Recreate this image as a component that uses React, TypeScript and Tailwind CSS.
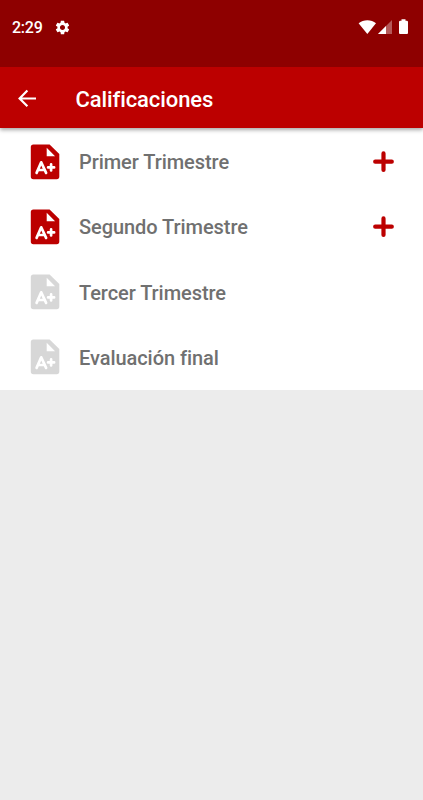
import { MdSettings } from "react-icons/md";

type Term = {
  label: string;
  available: boolean;
};

const terms: Term[] = [
  { label: "Primer Trimestre", available: true },
  { label: "Segundo Trimestre", available: true },
  { label: "Tercer Trimestre", available: false },
  { label: "Evaluación final", available: false },
];

function GradeIcon({ className }: { className: string }) {
  return (
    <svg width="30" height="36" viewBox="0 0 30 36" className={className}>
      <path
        fill="currentColor"
        fillRule="evenodd"
        d="M3.4.4h16.2l9.7 9.6v22.6a2.6 2.6 0 0 1-2.6 2.6H3.4A2.6 2.6 0 0 1 .8 32.6V3A2.6 2.6 0 0 1 3.4.4zM16.7 3.8v8.4h8.4z"
      />
      <g fill="none" stroke="#fff" strokeLinecap="round" strokeLinejoin="round">
        <path strokeWidth="2.7" d="M6.6 28.9 11.2 18.3l4.9 10.6M8.4 26h6" />
        <path strokeWidth="2.7" d="M21.1 20.4v6M18.1 23.4h6" />
      </g>
    </svg>
  );
}

function StatusBar() {
  return (
    <div className="z-20 flex h-[67px] items-start justify-between bg-[#8e0000] pt-[17px] pr-[15px] pl-3 text-white">
      <div className="flex h-5 items-center">
        <span className="mt-0.5 w-[41.5px] text-[16px] leading-5 font-medium tracking-[-0.25px]">
          2:29
        </span>
        <MdSettings size={17} />
      </div>
      <div className="flex pt-0.5">
        <svg width="18" height="16" viewBox="0 0 18 16" fill="currentColor">
          <path d="M.6 4.3C5.4.2 13.4.2 18 4.3L9.3 15z" />
        </svg>
        <svg width="15" height="16" viewBox="0 0 15 16" className="ml-0.5" fill="currentColor">
          <path d="M0 15 14 1v14z" opacity=".35" />
          <path d="M0 15 8 7v8z" />
        </svg>
        <svg width="9" height="16" viewBox="0 0 9 16" className="ml-1.5" fill="currentColor">
          <path d="M2.5.3h4v1.4h1.3q1.2 0 1.2 1.2v11.2q0 1-1 1H1q-1 0-1-1V2.9q0-1.2 1.2-1.2h1.3z" />
        </svg>
      </div>
    </div>
  );
}

function AppBar() {
  return (
    <header className="z-10 flex h-[61px] items-center bg-[#bc0000] pl-[17px] text-white shadow-[0_2px_4px_rgba(0,0,0,0.35)]">
      <svg
        width="20"
        height="20"
        viewBox="0 0 20 20"
        fill="none"
        stroke="currentColor"
        strokeWidth="2.2"
      >
        <path d="M19 10.5H2.6M10.4 2.6 2.6 10.5l7.8 7.8" />
      </svg>
      <h1 className="mt-1 ml-[38.5px] text-[22px] leading-7 font-medium tracking-[-0.1px]">
        Calificaciones
      </h1>
    </header>
  );
}

export default function App() {
  return (
    <div className="flex min-h-screen flex-col bg-[#ececec] font-['Roboto',sans-serif]">
      <StatusBar />
      <AppBar />
      <ul className="bg-white pt-[1px]">
        {terms.map((term) => (
          <li key={term.label} className="flex h-[65.25px] items-center pr-[29px] pl-[30px]">
            <GradeIcon className={term.available ? "text-[#bc0000]" : "text-[#d7d7d7]"} />
            <span className="mt-[1px] ml-[19px] flex-1 text-[20px] leading-6 font-medium tracking-[-0.06px] text-[#707070]">
              {term.label}
            </span>
            {term.available && (
              <svg width="21" height="22" viewBox="0 0 21 22" className="text-[#bc0000]">
                <path
                  d="M10.5 2.4v16.6M2.2 10.7h16.6"
                  stroke="currentColor"
                  strokeWidth="4.2"
                  strokeLinecap="round"
                />
              </svg>
            )}
          </li>
        ))}
      </ul>
    </div>
  );
}
